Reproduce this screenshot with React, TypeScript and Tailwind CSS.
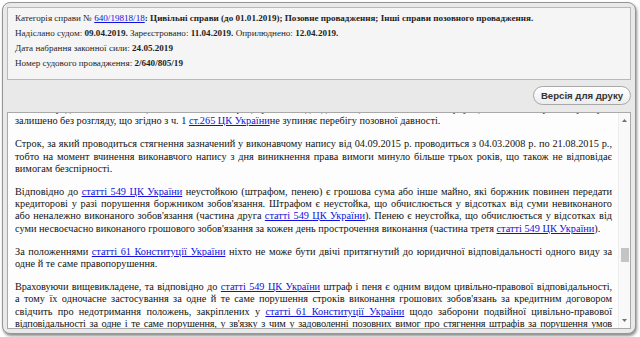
import React from "react";

const L = ({ children }: { children: React.ReactNode }) => (
  <a className="text-[#1010e0] underline" href="#">{children}</a>
);

const J = ({ children, t = "" }: { children: React.ReactNode; t?: string }) => (
  <span className={"block whitespace-nowrap text-justify [text-align-last:justify] " + t}>{children}</span>
);
const E = ({ children }: { children: React.ReactNode }) => (
  <span className="block whitespace-nowrap">{children}</span>
);

export default function App() {
  return (
    <div className="w-[640px] h-[337px] bg-white overflow-hidden">
      <div className="ml-[2px] mt-[2px] w-[634px] h-[332px] rounded-[8px] border border-[#959595] bg-[#e9e9e9] shadow-[1px_2px_3px_rgba(0,0,0,0.45)] px-[4px] pt-[4px] flex flex-col">
        <div className="border border-[#b9b9b9] bg-[#f5f5f5] pl-[7px] pt-[3px] pb-[8px] text-[9.1px] leading-[15px] text-[#1e1e1e] [font-family:'Liberation_Serif',serif]">
          <div className="whitespace-nowrap">
            Категорія справи № <L>640/19818/18</L>
            <b>: Цивільні справи (до 01.01.2019); Позовне провадження; Інші справи позовного провадження.</b>
          </div>
          <div className="whitespace-nowrap">
            Надіслано судом: <b>09.04.2019.</b> Зареєстровано: <b>11.04.2019.</b> Оприлюднено: <b>12.04.2019.</b>
          </div>
          <div className="whitespace-nowrap">
            Дата набрання законної сили: <b>24.05.2019</b>
          </div>
          <div className="whitespace-nowrap">
            Номер судового провадження: <b>2/640/805/19</b>
          </div>
        </div>
        <div className="flex justify-end mt-[6px]">
          <button className="h-[19px] w-[98px] rounded-full border border-[#a8a8a8] bg-gradient-to-b from-white to-[#ececec] text-[9.6px] font-bold text-[#333] [font-family:'Liberation_Sans',sans-serif] leading-none">
            Версія для друку
          </button>
        </div>
        <div className="mt-[7px] flex-1 mb-[4px] border border-[#a9a9a9] bg-[#fdfdfd] flex overflow-hidden">
          <div className="flex-1 overflow-hidden pl-[7px] pr-[6px] text-[10.3px] leading-[12.2px] text-[#141414] [font-family:'Liberation_Serif',serif]">
            <div className="mt-[-10px]">
              <p className="mb-[11px]">
                <J>позов пред'явлено особою, яка не має процесуальної дієздатності, або позов повернуто, чи позовну заяву було</J>
                <E>залишено без розгляду, що згідно з ч. 1 <L>ст.265 ЦК України</L>не зупиняє перебігу позовної давності.</E>
              </p>
              <p className="mb-[11px]">
                <J>Строк, за який проводиться стягнення зазначений у виконавчому напису від 04.09.2015 р. проводиться з 04.03.2008 р. по 21.08.2015 р.,</J>
                <J>тобто на момент вчинення виконавчого напису з дня виникнення права вимоги минуло більше трьох років, що також не відповідає</J>
                <E>вимогам безспірності.</E>
              </p>
              <p className="mb-[11px]">
                <J>Відповідно до <L>статті 549 ЦК України</L> неустойкою (штрафом, пенею) є грошова сума або інше майно, які боржник повинен передати</J>
                <J>кредиторові у разі порушення боржником зобов'язання. Штрафом є неустойка, що обчислюється у відсотках від суми невиконаного</J>
                <J>або неналежно виконаного зобов'язання (частина друга <L>статті 549 ЦК України</L>). Пенею є неустойка, що обчислюється у відсотках від</J>
                <E>суми несвоєчасно виконаного грошового зобов'язання за кожен день прострочення виконання (частина третя <L>статті 549 ЦК України</L>).</E>
              </p>
              <p className="mb-[11px]">
                <J>За положеннями <L>статті 61 Конституції України</L> ніхто не може бути двічі притягнутий до юридичної відповідальності одного виду за</J>
                <E>одне й те саме правопорушення.</E>
              </p>
              <p className="mb-[11px]">
                <J t="tracking-[-0.08px]">Враховуючи вищевикладене, та відповідно до <L>статті 549 ЦК України</L> штраф і пеня є одним видом цивільно-правової відповідальності,</J>
                <J>а тому їх одночасне застосування за одне й те саме порушення строків виконання грошових зобов'язань за кредитним договором</J>
                <J>свідчить про недотримання положень, закріплених у <L>статті 61 Конституції України</L> щодо заборони подвійної цивільно-правової</J>
                <J t="tracking-[-0.2px]">відповідальності за одне і те саме порушення, у зв'язку з чим у задоволенні позовних вимог про стягнення штрафів за порушення умов</J>
                <J>кредитного договору слід відмовити.</J>
              </p>
            </div>
          </div>
          <div className="w-[12px] flex flex-col items-center bg-[#f9f9f9] border-l border-[#ededed]">
            <svg width="7" height="10" viewBox="0 0 7 10" className="mt-[3px]">
              <path d="M3.5 3 L6 6 L1 6 Z" fill="#707070" />
            </svg>
            <div className="mt-[122px] w-[8px] h-[14px] bg-[#c4c4c4]" />
            <div className="flex-1" />
            <svg width="7" height="10" viewBox="0 0 7 10" className="mb-[3px]">
              <path d="M1 4 L6 4 L3.5 7 Z" fill="#707070" />
            </svg>
          </div>
        </div>
      </div>
    </div>
  );
}
